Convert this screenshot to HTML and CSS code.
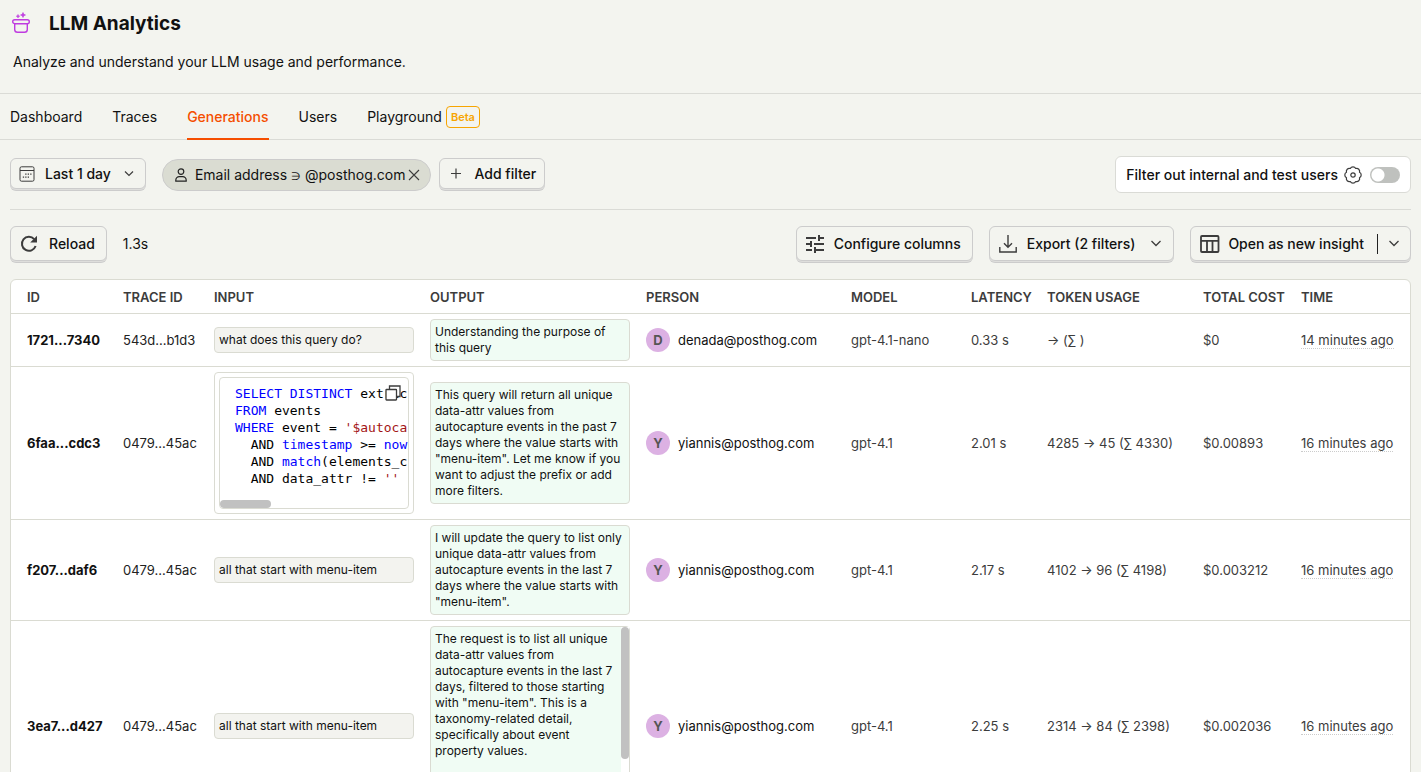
FILE: index.html
```html
<!DOCTYPE html>
<html lang="en">
<head>
<meta charset="utf-8">
<title>LLM Analytics</title>
<link rel="stylesheet" href="styles.css">
</head>
<body>
<div class="app">
  <header class="page-header">
    <div class="title-row">
      <svg class="title-icon" width="20" height="22" viewBox="0 0 20 22" fill="none" stroke="#bf3be0" stroke-width="1.4">
        <rect x="1.7" y="7.7" width="16.6" height="4" rx="2"/>
        <path d="M3.700 11.700V17.500C3.700 19.600 5 20.300 6.500 20.300H13.500C15 20.300 16.300 19.600 16.300 17.500V11.700"/>
        <path d="M12 .5l.8 1.700 1.700.8-1.700.8-.8 1.700-.8-1.700-1.700-.8 1.700-.8zM7 2.500l.5 1.200 1.200.5-1.200.5-.5 1.200-.5-1.200-1.200-.5 1.200-.5z" fill="#bf3be0" stroke-width=".6"/>
      </svg>
      <h1 class="title">LLM Analytics</h1>
    </div>
    <p class="description">Analyze and understand your LLM usage and performance.</p>
  </header>
  <nav class="tabs">
    <a class="tab" href="#">Dashboard</a>
    <a class="tab" href="#">Traces</a>
    <a class="tab tab-active" href="#" aria-current="page">Generations</a>
    <a class="tab" href="#">Users</a>
    <a class="tab" href="#">Playground <span class="beta">Beta</span></a>
  </nav>
  <main class="content">
    <div class="filters">
      <button class="btn btn-small btn-date" type="button">
        <svg width="16" height="16" viewBox="0 0 16 16" fill="none" stroke="#3c3c3c"><rect x="1" y=".8" width="14" height="14.400" rx="1.500"/><path d="M1 4.500h14"/><path d="M6.200 8.200h1.300M8.700 8.200h1.300M11.200 8.200h1.300M3.800 11.200h1.300M6.200 11.200h1.300M8.700 11.200h1.300" stroke-width="1.300"/></svg>
        <span>Last 1 day</span>
        <svg width="10" height="10" viewBox="0 0 10 10" fill="none" stroke="#3c3c3c" stroke-width="1.200"><path d="M1 2.500l4 4 4-4"/></svg>
      </button>
      <div class="pill">
        <svg width="12" height="14" viewBox="0 0 12 14" fill="none" stroke="#222" stroke-width="1.200"><circle cx="6" cy="3.600" r="2.800"/><path d="M.8 13.200v-1c0-2 1.600-3.600 3.500-3.600h3.400c1.900 0 3.500 1.600 3.500 3.600v1z"/></svg>
        <span class="pill-label">Email address <span class="op">∋</span> @posthog.com</span>
        <button class="pill-close" type="button" aria-label="Remove filter"><svg width="12" height="12" viewBox="0 0 12 12" fill="none" stroke="#3c3c3c" stroke-width="1.100"><path d="M1 1l10 10M11 1L1 11"/></svg></button>
      </div>
      <button class="btn btn-small btn-add" type="button">
        <svg width="12" height="12" viewBox="0 0 12 12" fill="none" stroke="#3c3c3c" stroke-width="1.200"><path d="M6 .5v10M1 5.500h10"/></svg>
        <span>Add filter</span>
      </button>
      <div class="toggle-box">
        <label for="internal">Filter out internal and test users</label>
        <svg width="18" height="18" viewBox="0 0 18 18" fill="none" stroke="#3c3c3c" stroke-width="1.200"><path d="M6.300 2.500A3 3 0 0 1 11.700 2.500A3 3 0 0 1 15.500 6.300A3 3 0 0 1 15.500 11.700A3 3 0 0 1 11.700 15.500A3 3 0 0 1 6.300 15.500A3 3 0 0 1 2.500 11.700A3 3 0 0 1 2.500 6.300A3 3 0 0 1 6.300 2.500Z" stroke-linejoin="round"/><circle cx="9" cy="9" r="2.200"/></svg>
        <input class="switch" id="internal" type="checkbox" role="switch">
      </div>
    </div>
    <div class="toolbar">
      <button class="btn btn-reload" type="button">
        <svg width="18" height="18" viewBox="0 0 18 18" fill="none" stroke="#3c3c3c" stroke-width="2"><path d="M14.200 4.200A7 7 0 1 0 15.600 11"/><path d="M17 .8v6.800h-6.800z" fill="#3c3c3c" stroke="none"/></svg>
        <span>Reload</span>
      </button>
      <span class="elapsed">1.3s</span>
      <button class="btn btn-tool" type="button">
        <svg width="18" height="18" viewBox="0 0 18 18" fill="none" stroke="#3c3c3c" stroke-width="2"><path d="M0 3h10M12 3h6M13 0v6M0 9h5M8 9h10M5 6v6M0 15h6M9 15h9M9 12v6"/></svg>
        <span>Configure columns</span>
      </button>
      <button class="btn btn-tool" type="button">
        <svg width="18" height="18" viewBox="0 0 18 18" fill="none" stroke="#3c3c3c" stroke-width="1.400"><path d="M9 0v12M5 8.300l4 4 4-4M.8 12v5h16.400v-5"/></svg>
        <span>Export (2 filters)</span>
        <svg class="chev" width="12" height="12" viewBox="0 0 12 12" fill="none" stroke="#3c3c3c" stroke-width="1.300"><path d="M1.500 3l4.500 4.500L10.500 3"/></svg>
      </button>
      <div class="btn split">
        <button class="split-main" type="button">
          <svg width="20" height="18" viewBox="0 0 20 18" fill="none" stroke="#3c3c3c" stroke-width="1.800"><rect x="1" y="1" width="17.500" height="16" rx="1"/><path d="M1 5.800h17.500M7 6v11M12.500 6v11"/></svg>
          <span>Open as new insight</span>
        </button>
        <button class="split-more" type="button" aria-label="More options"><svg width="12" height="12" viewBox="0 0 12 12" fill="none" stroke="#3c3c3c" stroke-width="1.300"><path d="M1.500 3l4.500 4.500L10.500 3"/></svg></button>
      </div>
    </div>
    <div class="table-wrap">
      <table class="table">
        <colgroup><col class="c-id"><col class="c-trace"><col class="c-msg"><col class="c-msg"><col class="c-person"><col class="c-model"><col class="c-latency"><col class="c-tokens"><col class="c-cost"><col class="c-time"></colgroup>
        <thead><tr><th>ID</th><th>TRACE ID</th><th>INPUT</th><th>OUTPUT</th><th>PERSON</th><th>MODEL</th><th>LATENCY</th><th>TOKEN USAGE</th><th>TOTAL COST</th><th>TIME</th></tr></thead>
        <tbody>
          <tr>
            <td><a class="id" href="#">1721...7340</a></td><td><a class="link" href="#">543d...b1d3</a></td>
            <td><div class="msg">what does this query do?</div></td>
            <td><div class="msg msg-out">Understanding the purpose of this query</div></td>
            <td><a class="person" href="#"><span class="avatar">D</span>denada@posthog.com</a></td>
            <td>gpt-4.1-nano</td><td>0.33 s</td><td>→ (∑ )</td><td>$0</td><td><span class="time">14 minutes ago</span></td>
          </tr>
          <tr>
            <td><a class="id" href="#">6faa...cdc3</a></td><td><a class="link" href="#">0479...45ac</a></td>
            <td><div class="msg msg-code"><div class="code">
              <div class="line"><span class="kw">SELECT</span> <span class="kw">DISTINCT</span> <span>extrac</span></div>
              <div class="line"><span class="kw">FROM</span> <span>events</span></div>
              <div class="line"><span class="kw">WHERE</span> <span>event =</span> <span class="str">'$autoca</span></div>
              <div class="line"><span>  AND</span> <span class="kw">timestamp</span> <span>&gt;=</span> <span class="kw">now</span></div>
              <div class="line"><span>  AND</span> <span class="kw">match</span><span>(elements_c</span></div>
              <div class="line"><span>  AND</span> <span>data_attr !=</span> <span class="str">''</span></div>
              <button class="copy" type="button" aria-label="Copy"><svg width="16" height="16" viewBox="0 0 16 16" fill="#fff" stroke="#3c3c3c" stroke-width="1.300"><path d="M4.500 4V1h10.500v10.500h-3"/><rect x="1" y="4.500" width="10.500" height="10.500" rx=".5"/></svg></button><span class="thumb-x"></span></div></div></td>
            <td><div class="msg msg-out">This query will return all unique data-attr values from autocapture events in the past 7 days where the value starts with "menu-item". Let me know if you want to adjust the prefix or add more filters.</div></td>
            <td><a class="person" href="#"><span class="avatar">Y</span>yiannis@posthog.com</a></td>
            <td>gpt-4.1</td><td>2.01 s</td><td>4285 → 45 (∑ 4330)</td><td>$0.00893</td><td><span class="time">16 minutes ago</span></td>
          </tr>
          <tr>
            <td><a class="id" href="#">f207...daf6</a></td><td><a class="link" href="#">0479...45ac</a></td>
            <td><div class="msg">all that start with menu-item</div></td>
            <td><div class="msg msg-out">I will update the query to list only unique data-attr values from autocapture events in the last 7 days where the value starts with "menu-item".</div></td>
            <td><a class="person" href="#"><span class="avatar">Y</span>yiannis@posthog.com</a></td>
            <td>gpt-4.1</td><td>2.17 s</td><td>4102 → 96 (∑ 4198)</td><td>$0.003212</td><td><span class="time">16 minutes ago</span></td>
          </tr>
          <tr>
            <td><a class="id" href="#">3ea7...d427</a></td><td><a class="link" href="#">0479...45ac</a></td>
            <td><div class="msg">all that start with menu-item</div></td>
            <td><div class="msg msg-out msg-scroll">The request is to list all unique data-attr values from autocapture events in the last 7 days, filtered to those starting with "menu-item". This is a taxonomy-related detail, specifically about event property values.<span class="track-y"></span></div></td>
            <td><a class="person" href="#"><span class="avatar">Y</span>yiannis@posthog.com</a></td>
            <td>gpt-4.1</td><td>2.25 s</td><td>2314 → 84 (∑ 2398)</td><td>$0.002036</td><td><span class="time">16 minutes ago</span></td>
          </tr>
        </tbody>
      </table>
    </div>
  </main>
</div>
</body>
</html>
```
FILE: styles.css
```css
* { box-sizing: border-box; }
body { margin: 0; background: #f3f4ef; color: #111; font: 14px/20px Inter, "Liberation Sans", sans-serif; }
button { font: inherit; color: inherit; cursor: pointer; }
a { color: inherit; text-decoration: none; }
svg { flex: none; display: block; }
.app { height: 100vh; overflow: hidden; }
.page-header { padding: 11px 11px 21px; border-bottom: 1px solid #dadbd6; }
.title-row { display: flex; align-items: center; gap: 18px; height: 24px; }
.title { margin: 0; padding-top: 2px; font-size: 19px; line-height: 24px; font-weight: 700; }
.description { margin: 17px 2px 0; }
.tabs { display: flex; gap: 30px; padding: 0 10px; height: 46px; border-bottom: 1px solid #dadbd6; }
.tab { display: flex; align-items: center; gap: 4px; height: 46px; padding-top: 2px; border-bottom: 2px solid transparent; }
.tab-active { color: #f54e00; border-color: #f54e00; font-weight: 500; }
.beta { padding: 0 4px; border: 1px solid #f7a501; border-radius: 4px; color: #f7a501; font-size: 11px; font-weight: 600; }
.content { padding: 0 10px; }
.filters { display: flex; align-items: center; padding: 16px 0; border-bottom: 1px solid #dadbd6; }
.btn { display: flex; align-items: center; background: #f3f4ef; border: 1px solid #ccc; border-radius: 6px; font-weight: 500; white-space: nowrap; box-shadow: 0 1px 0 #dededc, 0 2px 0 #ccc; height: 35px; }
.btn-small { height: 31px; margin-bottom: 2px; }
.btn-date { padding: 0 11px 0 8px; gap: 10px; }
.btn-date svg:last-child { margin-left: 3px; }
.pill { display: flex; align-items: center; height: 32px; margin: 0 8px 0 16px; padding: 0 10px 0 12px; background: #dadcd2; border: 1px solid #ccc; border-radius: 16px; }
.pill-label { margin: 0 3px 0 8px; padding-top: 1px; }
.op { font-size: 11px; }
.pill-close { padding: 0; border: 0; background: none; }
.btn-add { padding: 0 8px 0 10px; gap: 12px; }
.toggle-box { display: flex; align-items: center; gap: 6px; margin-left: auto; height: 37px; padding: 0 10px; background: #fff; border: 1px solid #dadbd6; border-radius: 6px; font-weight: 500; }
.switch { appearance: none; width: 30px; height: 16px; margin: 0 0 0 2px; border-radius: 8px; background: radial-gradient(circle at 8px 8px, #fff 6px, #bfc1be 7px); }
.toolbar { display: flex; align-items: center; gap: 16px; padding: 16px 0 18px; }
.btn-reload { padding: 0 11px 0 9px; gap: 11px; }
.btn-tool { padding: 0 11px 0 9px; gap: 10px; }
.elapsed { margin-right: auto; padding-top: 1px; }
.chev { margin-left: 5px; }
.split { padding: 0 10px 0 9px; }
.split-main, .split-more { display: flex; align-items: center; height: 20px; padding: 0; border: 0; background: none; font-weight: 500; }
.split-main { gap: 8px; padding-right: 13px; border-right: 1px solid #222; }
.split-more { padding-left: 10px; }
.table-wrap { background: #fff; border: 1px solid #dadbd2; border-radius: 6px; overflow: hidden; }
.table { width: 100%; table-layout: fixed; border-collapse: separate; border-spacing: 0; font-size: 13px; line-height: 20px; color: #3c3c3c; }
.c-id { width: 104px; } .c-trace { width: 91px; } .c-msg { width: 216px; } .c-person { width: 205px; } .c-model { width: 120px; }
.c-latency { width: 76px; } .c-tokens { width: 156px; } .c-cost { width: 98px; } .c-time { width: 117px; }
.table th { height: 34px; padding: 0 8px; text-align: left; font-size: 13px; font-weight: 600; border-bottom: 1px solid #dadbd2; white-space: nowrap; }
.table td { padding: 5px 8px; border-bottom: 1px solid #dadbd2; vertical-align: middle; white-space: nowrap; }
.table th:first-child, .table td:first-child { padding-left: 16px; }
.id { color: #111; font-weight: 700; }
.link { color: #222; }
.msg { position: relative; width: 200px; padding: 4px; border: 1px solid #dadbd2; border-radius: 4px; background: #f3f3ef; color: #111; font-size: 12px; line-height: 16px; white-space: normal; }
.msg-out { background: #f0fcf4; }
.msg-code { background: #fff; }
.code { position: relative; height: 132px; padding: 7px 0 0 15px; border: 1px solid #dadbd2; border-radius: 4px; overflow: hidden; color: #000; font: 13px/17px "DejaVu Sans Mono", monospace; }
.line { white-space: pre; }
.kw { color: #00f; }
.str { color: #a31515; }
.copy { position: absolute; top: 7px; right: 7px; padding: 0; border: 0; background: none; }
.thumb-x { position: absolute; left: 0; bottom: 0; width: 51px; height: 8px; border-radius: 4px; background: #c1c1c1; }
.msg-scroll { height: 200px; padding-right: 12px; }
.track-y { position: absolute; top: 0; right: 0; bottom: 0; width: 8px; background: #fff; }
.track-y::before { content: ""; display: block; height: 132px; border-radius: 4px; background: #c1c1c1; }
.person { display: flex; align-items: center; gap: 8px; color: #111; }
.avatar { width: 24px; height: 24px; border-radius: 50%; background: #dcb1e3; color: #555; font-weight: 700; line-height: 24px; text-align: center; }
.time { border-bottom: 1px dotted #ccc; }
```
